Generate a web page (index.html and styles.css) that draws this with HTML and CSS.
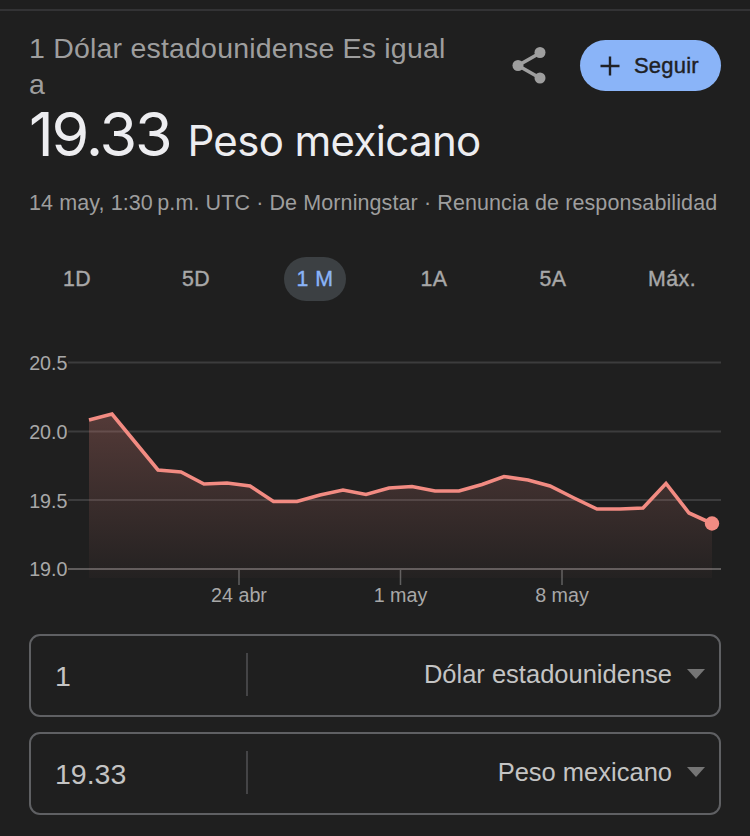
FILE: index.html
```html
<!DOCTYPE html>
<html lang="es">

<head>
	<meta charset="UTF-8">
	<title>1 Dólar estadounidense a Peso mexicano</title>
	<link rel="stylesheet" href="styles.css">
</head>

<body>
	<div class="card">
		<div class="header">
			<div class="from">1 Dólar estadounidense Es igual a</div>
			<div class="actions">
				<svg class="share" width="34" height="38" viewBox="0 0 34 38">
					<path d="M28 6 6 18.5 28 31" />
					<circle cx="28" cy="5.5" r="5.5" />
					<circle cx="6" cy="18.5" r="5.5" />
					<circle cx="28" cy="31" r="5.5" />
				</svg>
				<button class="follow">
					<svg width="20" height="20" viewBox="0 0 20 20">
						<path d="M10 .5v19M.5 10h19" />
					</svg>
					<span>Seguir</span>
				</button>
			</div>
		</div>
		<div class="rate"><span class="value">19.33</span><span class="currency">Peso mexicano</span></div>
		<div class="meta">14 may, 1:30&#8239;p.m. UTC · De Morningstar · Renuncia de responsabilidad</div>

		<div class="tabs">
			<span class="tab">1D</span>
			<span class="tab">5D</span>
			<span class="tab active">1 M</span>
			<span class="tab">1A</span>
			<span class="tab">5A</span>
			<span class="tab">Máx.</span>
		</div>

		<svg class="chart" width="692" height="270" viewBox="29 350 692 270">
			<defs>
				<linearGradient id="fill" gradientUnits="userSpaceOnUse" x1="0" y1="414" x2="0" y2="580">
					<stop offset="0" stop-color="#f28b82" stop-opacity=".25" />
					<stop offset="1" stop-color="#f28b82" stop-opacity=".02" />
				</linearGradient>
			</defs>
			<path class="grid" d="M68 362.5H721M68 431.5H721M68 500H721" />
			<path class="axis" d="M68 569H721" />
			<path class="tick" d="M239 570V585M400.5 570V585M562 570V585" />
			<path fill="url(#fill)" d="M89 420 112 414 135 442 158 470 181 472 204 484 227 483 250 486 273.5 501.5 297 501.5 320 495 343 490 366 494.5 389 488 412 486.5 435 491 459 491 482 484.5 504 476.5 528 480 550 486 574 498 597 509 620 509 643 508 666 483.5 689 513 712 523.5V578H89Z" />
			<polyline class="line" points="89,420 112,414 135,442 158,470 181,472 204,484 227,483 250,486 273.5,501.5 297,501.5 320,495 343,490 366,494.5 389,488 412,486.5 435,491 459,491 482,484.5 504,476.5 528,480 550,486 574,498 597,509 620,509 643,508 666,483.5 689,513 712,523.5" />
			<circle class="dot" cx="712" cy="523.5" r="7.2" />
			<g text-anchor="end">
				<text x="67.5" y="370">20.5</text>
				<text x="67.5" y="438.5">20.0</text>
				<text x="67.5" y="507.5">19.5</text>
				<text x="67.5" y="576">19.0</text>
			</g>
			<g text-anchor="middle">
				<text x="239" y="602">24 abr</text>
				<text x="400.5" y="602">1 may</text>
				<text x="562" y="602">8 may</text>
			</g>
		</svg>

		<div class="field">
			<span class="amount">1</span>
			<span class="unit">Dólar estadounidense</span>
			<svg class="arrow" width="18" height="10" viewBox="0 0 18 10"><path d="M0 0h18L9 10z" /></svg>
		</div>
		<div class="field">
			<span class="amount">19.33</span>
			<span class="unit">Peso mexicano</span>
			<svg class="arrow" width="18" height="10" viewBox="0 0 18 10"><path d="M0 0h18L9 10z" /></svg>
		</div>
	</div>
</body>

</html>
```
FILE: styles.css
```css
html,
body {
	margin: 0;
	padding: 0;
	background: #1f1f1f;
}

body {
	display: flow-root;
	height: 836px;
	overflow: hidden;
	font-family: 'Liberation Sans', Arial, sans-serif;
	color: #9e9e9e;
}

.card {
	margin-top: 9px;
	padding: 19px 29px 0;
	border-top: 2px solid #333335;
}

.header {
	display: flex;
	justify-content: space-between;
	height: 72px;
}

.from {
	width: 440px;
	font-size: 28.5px;
	line-height: 36px;
	letter-spacing: .2px;
}

.actions {
	display: flex;
	align-items: center;
	gap: 34px;
	height: 51px;
	margin-top: 10px;
}

.share {
	fill: #9e9e9e;
}

.share path {
	fill: none;
	stroke: #9e9e9e;
	stroke-width: 3.6;
}

.follow {
	display: flex;
	align-items: center;
	gap: 14px;
	width: 141px;
	height: 51px;
	padding: 0 0 0 20px;
	border: 0;
	border-radius: 26px;
	background: #8ab4f8;
	color: #202124;
	font: 22px 'Liberation Sans', Arial, sans-serif;
	letter-spacing: .2px;
	-webkit-text-stroke: .4px;
}

.follow path {
	stroke: #202124;
	stroke-width: 2.4;
}

.rate {
	height: 64px;
	line-height: 64px;
	color: #ededf0;
	font-family: Inter, sans-serif;
	white-space: nowrap;
}

.value {
	font-size: 61px;
	letter-spacing: -2.2px;
}

.currency {
	margin-left: 17px;
	font-size: 42px;
	letter-spacing: -.65px;
}

.meta {
	margin-top: 24px;
	font-size: 21.5px;
	line-height: 26px;
	letter-spacing: .1px;
	white-space: nowrap;
}

.tabs {
	display: grid;
	grid-template-columns: repeat(6, 119px);
	justify-items: center;
	margin: 41px -12px 0 -11.5px;
}

.tab {
	padding: 0 12px;
	border-radius: 22px;
	font-size: 21.3px;
	line-height: 44px;
	letter-spacing: .5px;
	color: #a8a8a8;
	-webkit-text-stroke: .4px;
}

.active {
	background: #3c4043;
	color: #8ab4f8;
}

/* 走势图 */
.chart {
	display: block;
	margin-top: 49px;
}

.chart text {
	font-size: 19.7px;
	fill: #a8a8a8;
}

.grid,
.axis,
.tick {
	fill: none;
	stroke: #3c3c3d;
	stroke-width: 2;
}

.axis {
	stroke: #5f5c5c;
}

.tick {
	stroke: #606060;
	stroke-width: 1.5;
}

.line {
	fill: none;
	stroke: #f28b82;
	stroke-width: 3.6;
}

.dot {
	fill: #f28b82;
}

.field {
	display: flex;
	align-items: center;
	box-sizing: border-box;
	height: 83px;
	margin-top: 15px;
	padding: 0 14px 3px 24px;
	border: 2px solid #5f6063;
	border-radius: 11px;
	color: #c4c4c4;
}

.chart + .field {
	margin-top: 14px;
}

.amount {
	width: 191px;
	padding-top: 4px;
	border-right: 2px solid #444446;
	font-size: 28.5px;
	line-height: 39px;
}

.unit {
	flex: 1;
	text-align: right;
	font-size: 25.5px;
}

.arrow {
	margin-left: 15px;
	fill: #757575;
}
```
